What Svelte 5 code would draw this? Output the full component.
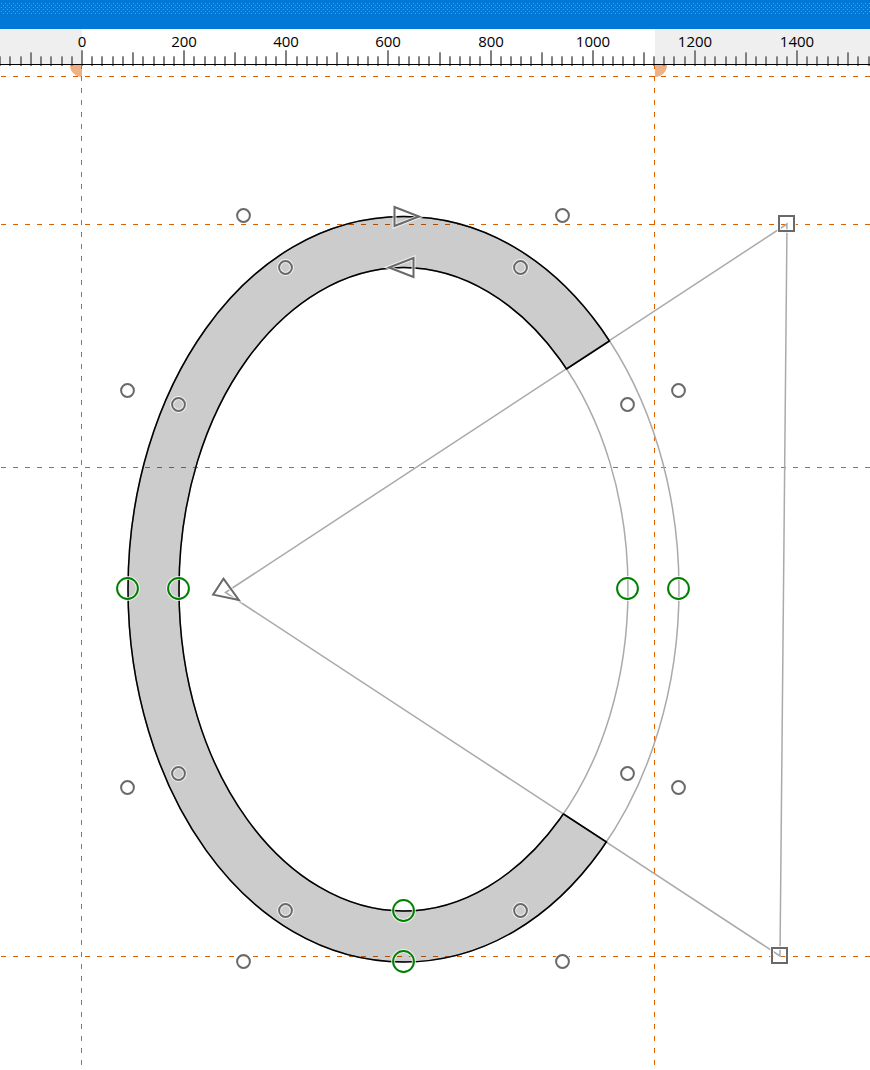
<script>
  const ORIGIN = 82;
  const MINOR = 10.215;

  const ticks = Array.from({ length: 260 }, (_, n) => {
    const index = n - 10;
    const top = index % 10 === 0 ? 21 : index % 5 === 0 ? 23 : 27;
    return { x: Math.round(ORIGIN + index * MINOR) - 1, top, height: 37 - top };
  });
  const labels = Array.from({ length: 8 }, (_, n) => ({
    value: n * 200,
    x: Math.round(ORIGIN + n * 10 * MINOR),
  }));

  const horizontalGuides = [76, 224, 467, 956];
  const verticalGuides = [81, 654];

  const outer =
    'M128 589C128 391 244 216.500 403.500 216.500S679 391 679 589S563 962 403.500 962S128 788 128 589Z';
  const inner =
    'M179 589C179 405 286 267.500 403.500 267.500S628 405 628 589S521 911 403.500 911S179 774 179 589Z';
  const wedge = 'M225.500 592.500L787 224L780 956Z';

  const nodes = [
    [127, 588], [178, 588], [627, 588], [678, 588], [403, 910], [403, 961],
  ];
  const controls = [
    [243, 215], [562, 215], [285, 267], [520, 267],
    [127, 390], [178, 404], [627, 404], [678, 390],
    [127, 787], [178, 773], [627, 773], [678, 787],
    [285, 910], [520, 910], [243, 961], [562, 961],
  ];
  const arrows = [
    { x: 402.5, y: 216.5, angle: 0 },
    { x: 405.5, y: 267.5, angle: 180 },
    { x: 225, y: 591, angle: 33 },
  ];
  const corners = [[786, 223], [779, 955]];
</script>

<div class="editor">
  <header class="titlebar"><div class="grip"></div></header>

  <svg class="ruler" role="img" aria-label="Horizontal ruler">
    <rect class="outside" x="0" y="0" width="82" height="36" />
    <rect class="outside" x="655" y="0" width="100%" height="36" />
    {#each ticks as tick}
      <rect class="tick" x={tick.x} y={tick.top} width="2" height={tick.height} />
      <rect class="tick-cap" x={tick.x} y={tick.top} width="2" height="1" />
    {/each}
    <rect class="baseline" x="0" y="35" width="100%" height="1" />
    {#each labels as label}
      <text x={label.x} y="18">{label.value}</text>
    {/each}
  </svg>

  <svg class="canvas" role="img" aria-label="Glyph outline">
    <defs>
      <clipPath id="outside-wedge">
        <path clip-rule="evenodd" d="M0 0H2000V2000H0Z{wedge}" />
      </clipPath>
    </defs>
    <g transform="translate(0 -65)">
      <path class="margin" d="M82 65V77A12 12 0 0 1 70 65Z" />
      <path class="margin" d="M655 65V77A12 12 0 0 0 667 65Z" />

      {#each horizontalGuides as y}
        <line class="guide" x1="1" x2="100%" y1={y + 0.5} y2={y + 0.5} />
      {/each}
      {#each verticalGuides as x}
        <line class="guide" x1={x + 0.5} x2={x + 0.5} y1="64" y2="200%" />
      {/each}

      <path class="outline" d={outer} />
      <path class="outline" d={inner} />
      <path class="outline" d={wedge} />
      <g clip-path="url(#outside-wedge)">
        <path class="fill" d="{outer}{inner}" />
        <path class="edge" d="{outer}{inner}" />
      </g>
      <path class="edge" d="M609.500 341L566.500 369M563.500 814L606.500 842" />

      {#each nodes as [x, y]}
        <circle class="halo" cx={x + 0.5} cy={y + 0.5} r="10.4" />
        <circle class="node" cx={x + 0.5} cy={y + 0.5} r="10.4" />
      {/each}
      {#each controls as [x, y]}
        <circle class="halo" cx={x + 0.5} cy={y + 0.5} r="6.4" />
        <circle class="handle" cx={x + 0.5} cy={y + 0.5} r="6.4" />
      {/each}
      {#each corners as [x, y]}
        <rect class="halo" x={x - 7} y={y - 7} width="15" height="15" />
        <rect class="handle" x={x - 7} y={y - 7} width="15" height="15" />
      {/each}
      {#each arrows as arrow}
        <g transform="translate({arrow.x} {arrow.y}) rotate({arrow.angle})">
          <path class="halo" d="M-8 -9.500L16.500 0L-8 9.500Z" />
          <path class="handle" d="M-8 -9.500L16.500 0L-8 9.500Z" />
        </g>
      {/each}
    </g>
  </svg>
</div>

<style>
  :global(body) {
    margin: 0;
    background: #fff;
  }
  .editor {
    display: flex;
    flex-direction: column;
    height: 100vh;
    overflow: hidden;
    background: #fff;
  }
  .titlebar {
    flex: none;
    box-sizing: border-box;
    height: 29px;
    padding-top: 3px;
    background: #0078d7;
  }
  .grip {
    height: 11px;
    background-image:
      conic-gradient(from 0deg at 1px 1px, transparent 75%, #45a5f5 0),
      conic-gradient(from 0deg at 1px 1px, transparent 75%, #45a5f5 0);
    background-size: 4px 4px;
    background-position: 1px 0, 3px 2px;
  }
  .ruler {
    position: relative;
    flex: none;
    display: block;
    width: 100%;
    height: 36px;
    overflow: visible;
  }
  .outside {
    fill: #efefef;
  }
  .tick {
    fill: #808080;
  }
  .tick-cap {
    fill: #a8a8a8;
  }
  .baseline {
    fill: #000;
  }
  text {
    font-family: "Open Sans", "Noto Sans", sans-serif;
    font-size: 15px;
    text-anchor: middle;
    fill: #000;
  }
  .canvas {
    flex: 1;
    display: block;
    width: 100%;
    min-height: 0;
  }
  .margin {
    fill: #efb083;
  }
  .guide {
    stroke: #dc5f00;
    stroke-width: 1px;
    stroke-dasharray: 5 7;
    shape-rendering: crispEdges;
  }
  .fill {
    fill: rgba(0, 0, 0, 0.2);
    fill-rule: evenodd;
  }
  .outline {
    fill: none;
    stroke: #aaa;
    stroke-width: 1.5;
  }
  .edge {
    fill: none;
    stroke: #000;
    stroke-width: 1.5;
    stroke-linecap: round;
  }
  .halo {
    fill: none;
    stroke: rgba(255, 255, 255, 0.75);
    stroke-width: 4;
  }
  .handle {
    fill: none;
    stroke: #696969;
    stroke-width: 2;
  }
  .node {
    fill: none;
    stroke: #008000;
    stroke-width: 2;
  }
</style>
